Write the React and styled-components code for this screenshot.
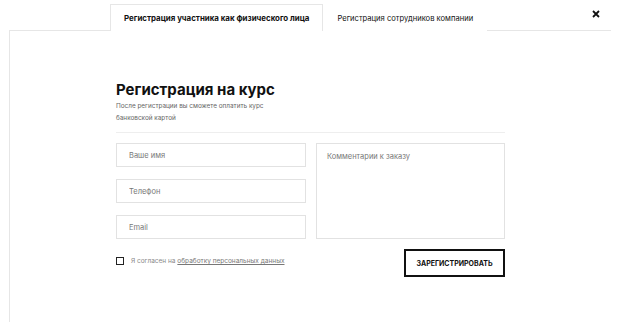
import React from "react";
import styled, { createGlobalStyle } from "styled-components";

const GlobalStyle = createGlobalStyle`
  html, body {
    margin: 0;
    padding: 0;
    background: #fff;
  }
  body {
    font-family: Inter, "Noto Sans", "Liberation Sans", sans-serif;
    color: #111;
  }
`;

const Page = styled.div`
  width: 602px;
  padding: 4px 0 0 9px;
`;

const TabBar = styled.div`
  display: flex;
  align-items: stretch;
  height: 26px;
  padding-left: 101px;
`;

const Tab = styled.button`
  height: 27px;
  margin-bottom: -1px;
  padding: 0 13px;
  border: 1px solid ${(p) => (p.$active ? "#e6e6e6" : "transparent")};
  border-bottom: none;
  background: #fff;
  font-family: inherit;
  font-size: ${(p) => (p.$active ? "7.9px" : "7.6px")};
  font-weight: ${(p) => (p.$active ? 700 : 400)};
  color: #111;
  cursor: pointer;
  position: relative;
  z-index: 1;
`;

const CloseButton = styled.button`
  margin-left: auto;
  margin-right: 9px;
  align-self: flex-start;
  margin-top: 4px;
  width: 12px;
  height: 12px;
  padding: 0;
  border: none;
  background: none;
  display: flex;
  align-items: center;
  justify-content: center;
  cursor: pointer;
`;

const Panel = styled.div`
  border-top: 1px solid #e6e6e6;
  border-left: 1px solid #e6e6e6;
  height: 292px;
  padding: 50px 0 0 106px;
  box-sizing: border-box;
`;

const Form = styled.form`
  width: 389px;
`;

const Heading = styled.h2`
  margin: 0;
  font-size: 15px;
  font-weight: 700;
  letter-spacing: 0;
  line-height: 18px;
`;

const Lead = styled.p`
  margin: 1px 0 0;
  width: 160px;
  font-size: 6.4px;
  line-height: 12px;
  color: #666;
`;

const Divider = styled.hr`
  margin: 8px 0 10px;
  border: none;
  border-top: 1px solid #eee;
`;

const Fields = styled.div`
  display: grid;
  grid-template-columns: 190px 189px;
  column-gap: 10px;
`;

const Column = styled.div`
  display: flex;
  flex-direction: column;
  gap: 12px;
`;

const Input = styled.input`
  box-sizing: border-box;
  width: 100%;
  height: 24px;
  padding: 0 12px;
  border: 1px solid #e2e2e2;
  font-family: inherit;
  font-size: 7.5px;
  color: #111;
  outline: none;

  &::placeholder {
    color: #777;
  }
`;

const TextArea = styled.textarea`
  box-sizing: border-box;
  width: 100%;
  height: 96px;
  padding: 8px 10px;
  border: 1px solid #e2e2e2;
  font-family: inherit;
  font-size: 7.5px;
  resize: none;
  outline: none;

  &::placeholder {
    color: #777;
  }
`;

const Footer = styled.div`
  display: flex;
  align-items: flex-start;
  justify-content: space-between;
  margin-top: 10px;
`;

const Agree = styled.label`
  display: flex;
  align-items: center;
  gap: 7px;
  margin-top: 8px;
  font-size: 6.5px;
  color: #888;
`;

const Box = styled.span`
  box-sizing: border-box;
  width: 8px;
  height: 8px;
  border: 1px solid #222;
`;

const Link = styled.a`
  color: #777;
  text-decoration: underline;
`;

const Submit = styled.button`
  box-sizing: border-box;
  width: 101px;
  height: 28px;
  border: 2px solid #111;
  background: #fff;
  font-family: inherit;
  font-size: 7px;
  font-weight: 700;
  color: #111;
  cursor: pointer;
`;

function App() {
  return (
    <Page>
      <GlobalStyle />
      <TabBar>
        <Tab $active>Регистрация участника как физического лица</Tab>
        <Tab>Регистрация сотрудников компании</Tab>
        <CloseButton aria-label="close">
          <svg width="8" height="8" viewBox="0 0 8 8">
            <path d="M1 1L7 7M7 1L1 7" stroke="#111" strokeWidth="1.8" />
          </svg>
        </CloseButton>
      </TabBar>
      <Panel>
        <Form>
          <Heading>Регистрация на курс</Heading>
          <Lead>После регистрации вы сможете оплатить курс банковской картой</Lead>
          <Divider />
          <Fields>
            <Column>
              <Input placeholder="Ваше имя" />
              <Input placeholder="Телефон" />
              <Input placeholder="Email" />
            </Column>
            <TextArea placeholder="Комментарии к заказу" />
          </Fields>
          <Footer>
            <Agree>
              <Box />
              <span>
                Я согласен на <Link href="#">обработку персональных данных</Link>
              </span>
            </Agree>
            <Submit type="button">ЗАРЕГИСТРИРОВАТЬ</Submit>
          </Footer>
        </Form>
      </Panel>
    </Page>
  );
}

export default App;
